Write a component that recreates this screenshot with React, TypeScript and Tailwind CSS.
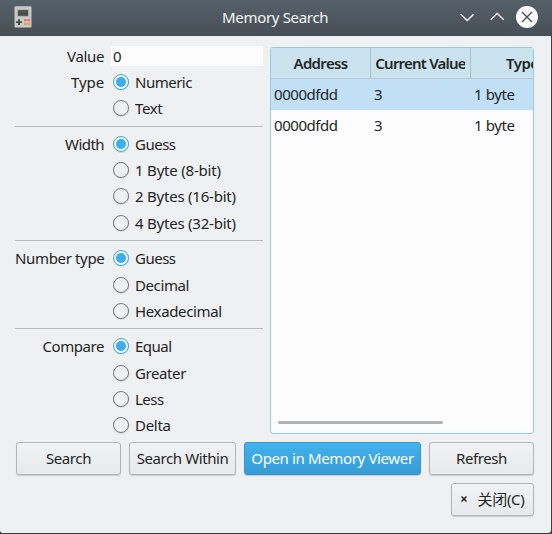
import React from "react";

type Option = { label: string; track: string; tall?: boolean };
type Group = { name: string; track: string; options: Option[]; divider?: string };

const groups: Group[] = [
  {
    name: "Type",
    track: "tracking-[-0.1px]",
    options: [
      { label: "Numeric", track: "tracking-[-0.5px]" },
      { label: "Text", track: "tracking-[-0.4px]" },
    ],
    divider: "h-[10px] pt-[5px]",
  },
  {
    name: "Width",
    track: "tracking-[-0.55px]",
    options: [
      { label: "Guess", track: "tracking-[-0.5px]" },
      { label: "1 Byte (8-bit)", track: "tracking-[-0.2px]" },
      { label: "2 Bytes (16-bit)", track: "tracking-[-0.22px]" },
      { label: "4 Bytes (32-bit)", track: "tracking-[-0.22px]", tall: true },
    ],
    divider: "h-[9px] pt-[4px]",
  },
  {
    name: "Number type",
    track: "tracking-[-0.35px]",
    options: [
      { label: "Guess", track: "tracking-[-0.5px]" },
      { label: "Decimal", track: "tracking-[-0.4px]", tall: true },
      { label: "Hexadecimal", track: "tracking-[-0.35px]" },
    ],
    divider: "h-[9px] pt-[4px]",
  },
  {
    name: "Compare",
    track: "tracking-[-0.45px]",
    options: [
      { label: "Equal", track: "tracking-[-0.5px]" },
      { label: "Greater", track: "tracking-[-0.4px]", tall: true },
      { label: "Less", track: "tracking-[-0.5px]" },
      { label: "Delta", track: "tracking-[-0.3px]" },
    ],
  },
];

function Radio({ checked }: { checked: boolean }) {
  return (
    <svg width="18" height="18" viewBox="0 0 18 18" className="shrink-0">
      <circle cx="9.3" cy="9.6" r="7.8" fill="none" stroke="#000" strokeOpacity="0.12" />
      <circle cx="9" cy="9" r="7.5" fill={checked ? "#f0f2f4" : "#eff0f1"} stroke={checked ? "#3daee9" : "#77797c"} />
      {checked && <circle cx="9" cy="9" r="5" fill="#3daee9" />}
    </svg>
  );
}

function OptionGroup({ group }: { group: Group }) {
  return (
    <div>
      {group.options.map((o, i) => (
        <div key={o.label} className={`flex items-center ${o.tall ? "h-[27px] pt-px" : "h-[26px]"}`}>
          <div className={`w-[89px] whitespace-nowrap text-right ${group.track}`}>{i === 0 ? group.name : ""}</div>
          <div className="ml-2 flex items-center gap-[5px] whitespace-nowrap">
            <Radio checked={i === 0} />
            <span className={o.track}>{o.label}</span>
          </div>
        </div>
      ))}
      {group.divider && (
        <div className={group.divider}>
          <div className="h-px bg-[#b8babc]" />
        </div>
      )}
    </div>
  );
}

function Button({ children, className = "", primary = false }: { children: React.ReactNode; className?: string; primary?: boolean }) {
  return (
    <button
      className={`flex h-[33px] items-center justify-center whitespace-nowrap rounded-[3px] border pb-[2px] shadow-[0_1px_1px_rgba(0,0,0,0.16)] ${
        primary
          ? "border-[#3498cf] bg-linear-to-b from-[#42b2ee] to-[#369cd5] text-[#fcfcfc]"
          : "border-[#b3b5b7] bg-linear-to-b from-[#f1f2f3] to-[#e8e9ea]"
      } ${className}`}
    >
      {children}
    </button>
  );
}

function TitleBar() {
  return (
    <div className="flex h-9 bg-linear-to-b from-[#566169] to-[#474f56]">
      <svg width="18" height="22" viewBox="0 0 18 22" className="ml-[14px] mt-[6px]">
        <rect x="0.5" y="0.3" width="17" height="21.2" rx="1.2" fill="#c9c9c8" />
        <rect x="3" y="3.2" width="12" height="7.5" fill="#aaa" />
        <rect x="4" y="4.2" width="10" height="5.6" fill="#4d4d4d" />
        <path d="M4 13.2h2v2h2v1.8H6v2H4v-2H2v-1.8h2z" fill="#4d4d4d" />
        <path d="M10 13h2.6v2.2H10zM13.4 13H16v2.2h-2.6z" fill="#f36d6d" />
        <path d="M10 16.8h2.6V19H10zM13.4 16.8H16V19h-2.6z" fill="#f59b45" />
      </svg>
      <div className="ml-[190px] w-[106px] whitespace-nowrap pt-[6px] leading-[22px] tracking-[-0.32px] text-[#f4f5f5]">Memory Search</div>
      <svg width="82" height="24" viewBox="0 0 82 24" className="ml-[131px] mt-[5px]" fill="none" stroke="#fcfcfc" strokeWidth="1.3">
        <path d="M1.700 9.200l6.500 6.300L14.700 9.200M31.700 14.700l6.500-6.300 6.500 6.300" />
        <circle cx="68" cy="12" r="11" fill="#fcfcfc" stroke="none" />
        <path d="M63 7l10 10M73 7L63 17" stroke="#475057" strokeWidth="1.4" />
      </svg>
    </div>
  );
}

function ResultTable() {
  return (
    <div className="h-[387px] w-[264px] overflow-hidden rounded-[3px] border border-[#93cee9] bg-[#fcfcfc]">
      <div className="flex h-[31px] w-[300px] border-b border-[#b5ccd6] bg-[#cbe3ee] font-semibold leading-[31px]">
        <div className="w-[100px] border-r border-[#a9c0ca] text-center tracking-[-0.65px]">Address</div>
        <div className="w-[100px] border-r border-[#a9c0ca] pl-[5px] pr-[5px]">
          <div className="flex justify-center overflow-hidden whitespace-nowrap tracking-[-0.8px]">Current Value</div>
        </div>
        <div className="pl-[35px] tracking-[-0.5px]">Type</div>
      </div>
      {[true, false].map((selected, i) => (
        <div key={i} className={`flex h-[31px] leading-[31px] ${selected ? "bg-[#c1dff5]" : ""}`}>
          <div className="w-[100px] pl-[3px] tracking-[-0.45px]">0000dfdd</div>
          <div className="w-[100px] pl-[3px]">3</div>
          <div className="whitespace-nowrap pl-[3px] tracking-[-0.4px]">1 byte</div>
        </div>
      ))}
      <div className="ml-[7px] mt-[280px] h-[3px] w-[165px] rounded-full bg-[#b1b2b3]" />
    </div>
  );
}

export default function App() {
  return (
    <div className="h-[534px] w-[552px] overflow-hidden bg-[#3a4146] font-['Noto_Sans','Noto_Sans_CJK_SC',sans-serif] text-[15px] leading-5 text-[#232627]">
      <TitleBar />
      <div className="h-[497px] w-[551px] rounded-b-[3px] bg-[#eff0f1] pl-[15px] pt-[10px]">
        <div className="flex">
          <div className="w-[248px]">
            <div className="mb-[3px] flex h-5 items-center">
              <div className="w-[89px] text-right tracking-[-0.35px]">Value</div>
              <div className="ml-[7px] h-5 w-[152px] bg-[#fcfcfc] pl-[2px] leading-[21px]">0</div>
            </div>
            {groups.map((g) => (
              <OptionGroup key={g.name} group={g} />
            ))}
          </div>
          <div className="ml-[7px] mt-px">
            <ResultTable />
          </div>
        </div>
        <div className="ml-px mt-1 flex gap-2">
          <Button className="w-[105px] tracking-[-0.4px]">Search</Button>
          <Button className="w-[107px] tracking-[-0.42px]">Search Within</Button>
          <Button primary className="w-[177px] tracking-[-0.36px]">Open in Memory Viewer</Button>
          <Button className="w-[105px] tracking-[-0.4px]">Refresh</Button>
        </div>
        <div className="mt-2 flex justify-end pr-[17px]">
          <Button className="w-[83px] gap-[11px] tracking-[-0.3px]">
            <svg width="6" height="6" viewBox="0 0 6 6" stroke="#232627" strokeWidth="1.5">
              <path d="M.5.5l5 5M5.500.500l-5 5" />
            </svg>
            <span>关闭(C)</span>
          </Button>
        </div>
      </div>
    </div>
  );
}
